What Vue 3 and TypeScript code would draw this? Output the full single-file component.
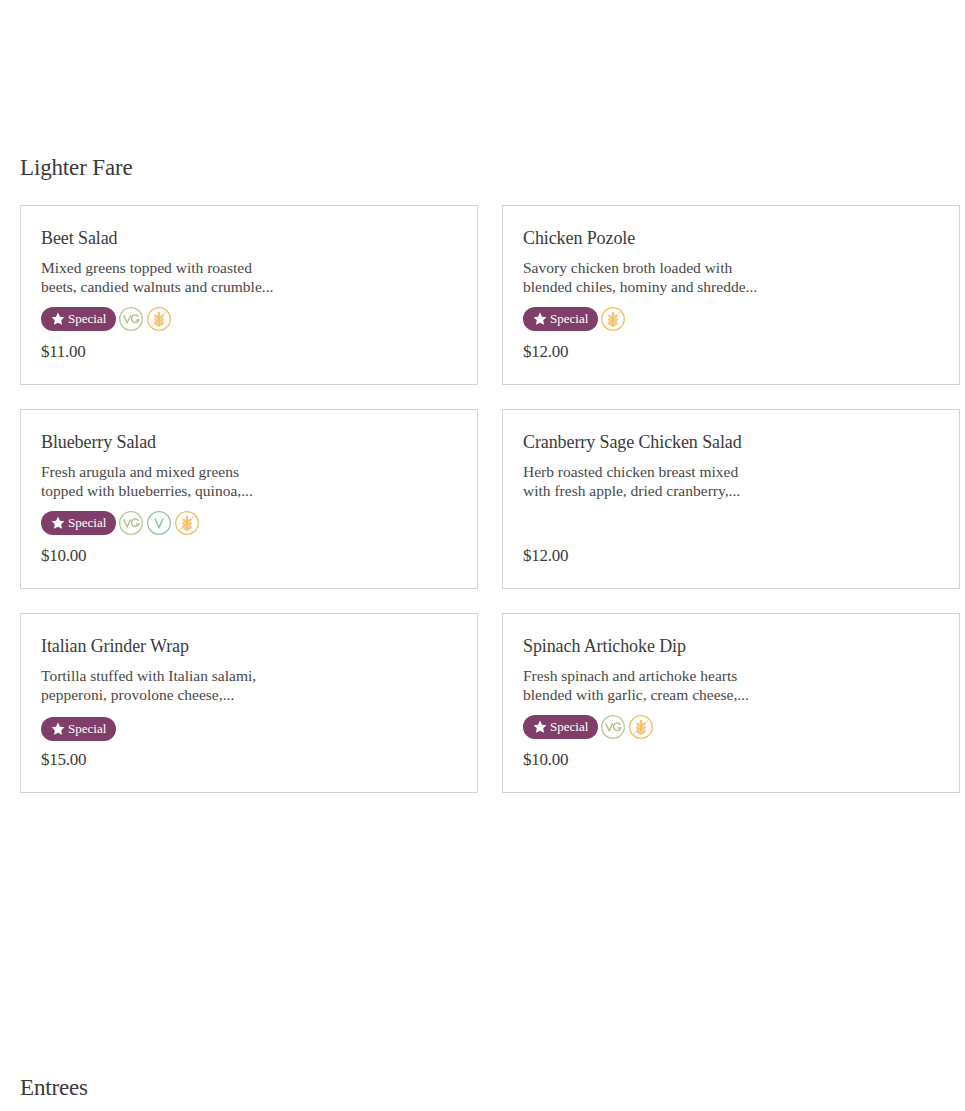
<script setup lang="ts">
type Diet = 'vg' | 'v' | 'gf'
type Dish = { name: string; desc: string[]; price: string; special: boolean; diets: Diet[] }

const dishes: Dish[] = [
  { name: 'Beet Salad', desc: ['Mixed greens topped with roasted', 'beets, candied walnuts and crumble...'], price: '$11.00', special: true, diets: ['vg', 'gf'] },
  { name: 'Chicken Pozole', desc: ['Savory chicken broth loaded with', 'blended chiles, hominy and shredde...'], price: '$12.00', special: true, diets: ['gf'] },
  { name: 'Blueberry Salad', desc: ['Fresh arugula and mixed greens', 'topped with blueberries, quinoa,...'], price: '$10.00', special: true, diets: ['vg', 'v', 'gf'] },
  { name: 'Cranberry Sage Chicken Salad', desc: ['Herb roasted chicken breast mixed', 'with fresh apple, dried cranberry,...'], price: '$12.00', special: false, diets: [] },
  { name: 'Italian Grinder Wrap', desc: ['Tortilla stuffed with Italian salami,', 'pepperoni, provolone cheese,...'], price: '$15.00', special: true, diets: [] },
  { name: 'Spinach Artichoke Dip', desc: ['Fresh spinach and artichoke hearts', 'blended with garlic, cream cheese,...'], price: '$10.00', special: true, diets: ['vg', 'gf'] },
]
</script>

<template>
  <main class="menu">
    <section class="lighter">
      <h2 class="heading">Lighter Fare</h2>
      <div class="grid">
        <article v-for="d in dishes" :key="d.name" class="card">
          <h3 class="name">{{ d.name }}</h3>
          <p class="desc">
            <span v-for="line in d.desc" :key="line" class="line">{{ line }}</span>
          </p>
          <div class="tags" :class="{ plain: !d.diets.length }">
            <span v-if="d.special" class="special">
              <svg class="star" viewBox="0 0 24 24" width="14" height="14"><path fill="#fff" d="M12 1l3.400 7 7.600 1-5.500 5.300 1.400 7.700L12 18.300 5.100 22l1.400-7.700L1 9l7.600-1z" /></svg>
              Special
            </span>
            <span v-for="t in d.diets" :key="t" class="diet">
              <svg v-if="t === 'vg'" viewBox="0 0 24 24" width="24" height="24" fill="none">
                <circle cx="12" cy="12" r="11.300" stroke="#b9c69a" stroke-width="1.300" />
                <path d="M4.600 8.300l3.600 7.400 3.600-7.400" stroke="#aec088" stroke-width="1.400" />
                <path d="M19.600 9.800a3.800 3.800 0 1 0 .3 3.200h-3.200" stroke="#aec088" stroke-width="1.400" />
              </svg>
              <svg v-else-if="t === 'v'" viewBox="0 0 24 24" width="24" height="24" fill="none">
                <circle cx="12" cy="12" r="11.300" stroke="#8cc79a" stroke-width="1.300" />
                <path d="M8 7.500l4 9 4-9" stroke="#86c193" stroke-width="1.400" />
              </svg>
              <svg v-else viewBox="0 0 24 24" width="24" height="24" fill="none">
                <circle cx="12" cy="12" r="11.300" stroke="#f3bd5e" stroke-width="1.300" />
                <path d="M4.500 19.500L19.500 4.500" stroke="#f9dfb0" stroke-width="1.200" />
                <path d="M12 5.500v14" stroke="#f0ae45" stroke-width="1.200" />
                <path fill="#f6cd87" stroke="#f2b65a" stroke-width=".6" d="M12 5c1.300 1.300 1.300 3 0 4.500-1.300-1.500-1.300-3.200 0-4.500zM12 12c-2.500-.4-4.300-1.700-4.400-3.900 2.500.3 4.300 1.600 4.400 3.900zM12 12c2.500-.4 4.300-1.700 4.400-3.900-2.500.3-4.300 1.600-4.400 3.900zM12 15.500c-2.700-.4-4.600-1.800-4.700-4 2.700.3 4.600 1.700 4.700 4zM12 15.500c2.700-.4 4.600-1.800 4.700-4-2.700.3-4.600 1.700-4.700 4zM12 19c-2.700-.4-4.600-1.800-4.700-4 2.700.3 4.600 1.700 4.700 4zM12 19c2.700-.4 4.600-1.800 4.700-4-2.700.3-4.600 1.700-4.700 4z" />
              </svg>
            </span>
          </div>
          <div class="price">{{ d.price }}</div>
        </article>
      </div>
    </section>
    <h2 class="heading entrees">Entrees</h2>
  </main>
</template>

<style scoped>
.menu {
  height: 1111px;
  overflow: hidden;
  padding: 154px 5px 0 20px;
  box-sizing: border-box;
  background: #fff;
  color: #333;
  font-family: "Liberation Serif", serif;
}

.heading {
  margin: 0;
  font-size: 23px;
  font-weight: 400;
  line-height: 27px;
  letter-spacing: -0.15px;
  color: #3a3a3a;
}

.grid {
  display: grid;
  grid-template-columns: 458px 458px;
  column-gap: 24px;
  row-gap: 24px;
  margin-top: 24px;
}

.card {
  height: 180px;
  box-sizing: border-box;
  border: 1px solid #d3d3d3;
  padding: 20px 20px 0;
  display: flex;
  flex-direction: column;
}

.name {
  margin: 0;
  font-size: 18px;
  font-weight: 400;
  line-height: 24px;
  letter-spacing: -0.1px;
  color: #3b3b3b;
}

.desc {
  margin: 8px 0 0;
  font-size: 15.5px;
  line-height: 19px;
  color: #484848;
}

.line {
  display: block;
}

.tags {
  display: flex;
  align-items: center;
  gap: 4px;
  height: 24px;
  margin-top: 11px;
}

.tags.plain {
  margin-top: 13px;
  margin-bottom: -2px;
}

.special {
  display: inline-flex;
  align-items: center;
  gap: 3px;
  height: 24px;
  width: 75px;
  box-sizing: border-box;
  margin-right: -1px;
  padding-left: 10px;
  border-radius: 12px;
  background: #7f3f68;
  color: #fff;
  font-size: 13px;
}

.diet {
  display: block;
  width: 24px;
  height: 24px;
}

.diet svg {
  display: block;
}

.price {
  margin-top: 9px;
  font-size: 17px;
  line-height: 24px;
  letter-spacing: -0.25px;
  color: #3c3c3c;
}

.entrees {
  margin-top: 281px;
}
</style>
